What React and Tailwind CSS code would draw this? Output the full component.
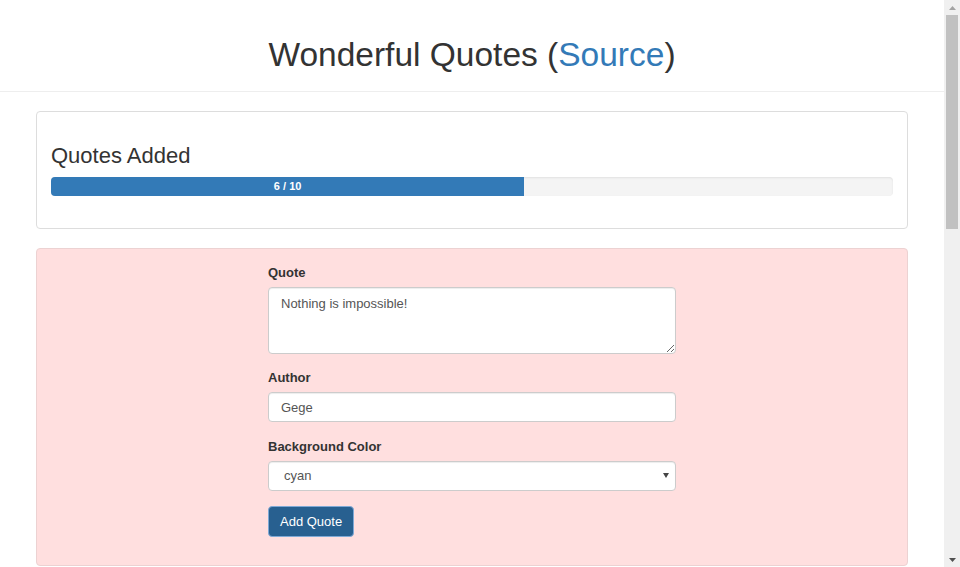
import { useState } from 'react';

function Scrollbar() {
  return (
    <aside className="w-[16px] h-screen shrink-0 bg-[#f0f0f0] flex flex-col items-center">
      <div className="h-[15px] flex items-center justify-center">
        <svg width="7" height="4" viewBox="0 0 7 4"><path d="M0 4 L3.5 0 L7 4 Z" fill="#a3a3a3" /></svg>
      </div>
      <div className="flex-1 w-full px-[2px]">
        <div className="h-[214px] w-full bg-[#c1c1c1]" />
      </div>
      <div className="h-[15px] flex items-center justify-center">
        <svg width="7" height="4" viewBox="0 0 7 4"><path d="M0 0 L7 0 L3.5 4 Z" fill="#505050" /></svg>
      </div>
    </aside>
  );
}

function App() {
  const [quote, setQuote] = useState('Nothing is impossible!');
  const [author, setAuthor] = useState('Gege');
  const [color, setColor] = useState('cyan');
  const added = 6;
  const max = 10;

  return (
    <div className="flex min-h-screen bg-white text-[13px] text-[#333] font-['Liberation_Sans',Arial,sans-serif]">
      <div className="flex-1 min-w-0">
        {/* Header */}
        <header className="h-[92px] border-b border-[#eee] pt-[37px]">
          <h1 className="text-center text-[33.5px] leading-[1.1] font-normal">
            Wonderful Quotes (<a href="#" className="text-[#337ab7]">Source</a>)
          </h1>
        </header>

        <main className="mx-[36px] pt-[19px]">
          {/* Progress */}
          <section className="h-[118px] rounded border border-[#ddd] px-[14px] pt-[32px]">
            <h3 className="text-[22px] leading-[24px] font-normal">Quotes Added</h3>
            <div className="mt-[9px] h-[19px] rounded bg-[#f4f4f4] overflow-hidden shadow-[inset_0_1px_2px_rgba(0,0,0,0.08)]">
              <div className="h-full w-[56.2%] bg-[#337ab7] text-white text-[11px] font-bold leading-[19px] text-center">
                {added} / {max}
              </div>
            </div>
          </section>

          {/* Form */}
          <section className="mt-[19px] rounded border border-[#ecd2d2] bg-[#ffdfdf] pt-[14px] pb-[28px]">
            <form className="w-[408px] mx-auto" onSubmit={(e) => e.preventDefault()}>
              <div className="mb-[14px]">
                <label className="block mb-[5px] font-bold leading-[19px]">Quote</label>
                <textarea
                  value={quote}
                  onChange={(e) => setQuote(e.target.value)}
                  className="block w-full h-[67px] rounded border border-[#ccc] bg-white px-[12px] py-[6px] text-[#555] leading-[19px] shadow-[inset_0_1px_1px_rgba(0,0,0,0.075)] outline-none"
                />
              </div>
              <div className="mb-[15px]">
                <label className="block mb-[5px] font-bold leading-[19px]">Author</label>
                <input
                  value={author}
                  onChange={(e) => setAuthor(e.target.value)}
                  className="block w-full h-[30px] rounded border border-[#ccc] bg-white px-[12px] text-[#555] shadow-[inset_0_1px_1px_rgba(0,0,0,0.075)] outline-none"
                />
              </div>
              <div className="mb-[15px]">
                <label className="block mb-[5px] font-bold leading-[19px]">Background Color</label>
                <div className="relative">
                  <select
                    value={color}
                    onChange={(e) => setColor(e.target.value)}
                    className="block w-full h-[30px] appearance-none rounded border border-[#ccc] bg-white pl-[15px] pr-[24px] text-[#555] shadow-[inset_0_1px_1px_rgba(0,0,0,0.075)] outline-none"
                  >
                    <option value="cyan">cyan</option>
                    <option value="pink">pink</option>
                    <option value="lightgreen">lightgreen</option>
                    <option value="yellow">yellow</option>
                  </select>
                  <svg className="pointer-events-none absolute right-[7px] top-[12px]" width="6" height="5" viewBox="0 0 6 5">
                    <path d="M0 0 L6 0 L3 5 Z" fill="#444" />
                  </svg>
                </div>
              </div>
              <button
                type="submit"
                className="h-[31px] rounded border border-[#7ea9d6] bg-[#286090] px-[11px] text-white leading-[19px]"
              >
                Add Quote
              </button>
            </form>
          </section>
        </main>
      </div>
      <Scrollbar />
    </div>
  );
}

export default App;
